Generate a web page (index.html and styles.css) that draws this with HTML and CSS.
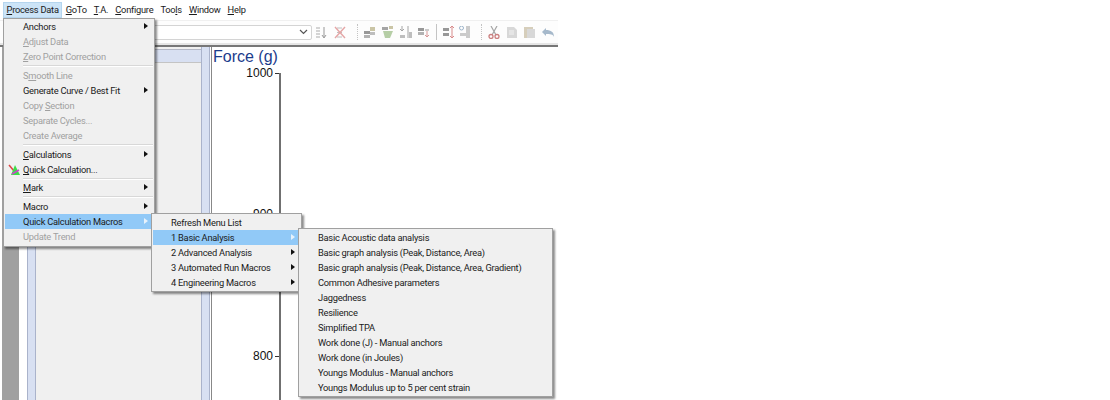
FILE: index.html
```html
<!DOCTYPE html>
<html lang="en">
<head>
  <meta charset="UTF-8" />
  <title>Process Data</title>
  <link rel="stylesheet" href="styles.css">
</head>
<body>
  <div class="app">
    <div class="menubar">
      <span class="top open"><u>P</u>rocess Data</span>
      <span class="top"><u>G</u>oTo</span>
      <span class="top"><u>T</u>.A.</span>
      <span class="top"><u>C</u>onfigure</span>
      <span class="top">Too<u>l</u>s</span>
      <span class="top"><u>W</u>indow</span>
      <span class="top"><u>H</u>elp</span>
    </div>
    <div class="toolbar">
      <div class="combo">
        <svg width="9" height="6" viewBox="0 0 9 6"><path d="M1 1l3.500 3.500L8 1" fill="none" stroke="#555" stroke-width="1.200"/></svg>
      </div>
      <div class="tools">
        <svg width="12" height="13" viewBox="0 0 12 13"><path d="M1 2h4M1 5h4M1 8h4M1 11h4" stroke="#b5b5b5" stroke-width="1.500"/><path d="M9 1v10M7 9l2 3 2-3" fill="none" stroke="#777"/></svg>
        <svg class="nudge" width="12" height="13" viewBox="0 0 12 13"><path d="M3 2h5M3 6.500h5M3 11h5" stroke="#aaa"/><path d="M1 1l10 11M11 1L1 12" stroke="#d88" stroke-width="1.400"/></svg>
        <i class="sep dots first"></i>
        <svg width="12" height="12" viewBox="0 0 12 12"><rect x="0" y="5" width="6" height="3" fill="#777"/><rect x="0" y="9" width="6" height="3" fill="#999"/><rect x="6" y="1" width="5" height="4" fill="#b9b38a"/><rect x="6" y="6" width="5" height="3" fill="#aaa"/></svg>
        <svg width="12" height="12" viewBox="0 0 12 12"><rect x="0" y="1" width="6" height="3" fill="#888"/><path d="M1 5h10l-3 7H3z" fill="#9fbf8a"/><rect x="7" y="0" width="4" height="3" fill="#b9b38a"/></svg>
        <svg width="12" height="12" viewBox="0 0 12 12"><path d="M2 0v5M0 3l2 2 2-2M8 0v12" fill="none" stroke="#888"/><path d="M0 9h5v3H0zM9 6h3v6H9z" fill="#aaa"/></svg>
        <svg width="12" height="12" viewBox="0 0 12 12"><rect x="0" y="2" width="6" height="3" fill="#777"/><rect x="0" y="6" width="6" height="3" fill="#999"/><path d="M9 5v6M7 9l2 2 2-2" fill="none" stroke="#c77"/><rect x="7" y="3" width="4" height="2" fill="#bbb"/></svg>
        <i class="sep"></i>
        <svg width="12" height="12" viewBox="0 0 12 12"><rect x="0" y="2" width="6" height="3" fill="#777"/><rect x="0" y="7" width="6" height="3" fill="#777"/><path d="M9 0v12M7 2l2-2 2 2M7 10l2 2 2-2" fill="none" stroke="#c66"/></svg>
        <svg class="pull" width="12" height="12" viewBox="0 0 12 12"><circle cx="2.500" cy="2" r="2" fill="none" stroke="#7a9ab8"/><path d="M7 0h4v12H7zM1 7h6v3H1z" fill="#bbb"/></svg>
        <i class="sep dots last"></i>
        <svg width="12" height="13" viewBox="0 0 12 13"><path d="M3 0l5 9M9 0L4 9" stroke="#888" stroke-width="1.200"/><circle cx="3" cy="10.500" r="2" fill="none" stroke="#b55" stroke-width="1.300"/><circle cx="9" cy="10.500" r="2" fill="none" stroke="#b55" stroke-width="1.300"/></svg>
        <svg width="12" height="11" viewBox="0 0 12 11"><path d="M1 0h7l3 3v8H1z" fill="#ccc"/><path d="M3 3h5v5H3z" fill="#ddd"/></svg>
        <svg width="12" height="12" viewBox="0 0 12 12"><rect x="0" y="1" width="9" height="11" fill="#c9bfa6"/><rect x="3" y="3" width="8" height="9" fill="#ccc"/></svg>
        <svg width="12" height="9" viewBox="0 0 12 9"><path d="M0 4l4-4v2c5 0 8 2 8 7-1-3-4-3-8-3v2z" fill="#8aa3bb"/></svg>
      </div>
    </div>
    <div class="workspace">
      <div class="strip"></div>
      <div class="margin"></div>
      <div class="divider"></div>
      <div class="panel"><div class="panel-head"></div></div>
      <div class="divider"></div>
      <div class="plot">
        <div class="plot-title">Force (g)</div>
        <div class="axis">
          <span class="tick t1000">1000</span>
          <span class="tick t900">900</span>
          <span class="tick t800">800</span>
        </div>
      </div>
    </div>
  </div>

  <ul class="menu menu-main">
    <li class="item sub">Anchors</li>
    <li class="item off"><u>A</u>djust Data</li>
    <li class="item off"><u>Z</u>ero Point Correction</li>
    <li class="rule"></li>
    <li class="item off">S<u>m</u>ooth Line</li>
    <li class="item sub">Generate Curve / Best Fit</li>
    <li class="item off">Copy <u>S</u>ection</li>
    <li class="item off">Separate Cycles...</li>
    <li class="item off">Create Average</li>
    <li class="rule"></li>
    <li class="item sub"><u>C</u>alculations</li>
    <li class="item">
      <svg class="calc-icon" width="14" height="12" viewBox="0 0 14 12"><path d="M1 1l5 6" stroke="#d44" stroke-width="1.500"/><path d="M7 1L3 11h9z" fill="#3ddc4a"/><path d="M4 10l7-4" stroke="#c4c" stroke-width="1.500"/></svg>
      <u>Q</u>uick Calculation...
    </li>
    <li class="rule tight"></li>
    <li class="item sub"><u>M</u>ark</li>
    <li class="rule"></li>
    <li class="item sub">Macro</li>
    <li class="item sub active">Quick Calculation Macros</li>
    <li class="item off">Update Trend</li>
  </ul>

  <ul class="menu menu-macros">
    <li class="item">Refresh Menu List</li>
    <li class="item sub active">1 Basic Analysis</li>
    <li class="item sub">2 Advanced Analysis</li>
    <li class="item sub">3 Automated Run Macros</li>
    <li class="item sub">4 Engineering Macros</li>
  </ul>

  <ul class="menu menu-basic">
    <li class="item">Basic Acoustic data analysis</li>
    <li class="item">Basic graph analysis (Peak, Distance, Area)</li>
    <li class="item">Basic graph analysis (Peak, Distance, Area, Gradient)</li>
    <li class="item">Common Adhesive parameters</li>
    <li class="item">Jaggedness</li>
    <li class="item">Resilience</li>
    <li class="item">Simplified TPA</li>
    <li class="item">Work done (J) - Manual anchors</li>
    <li class="item">Work done (in Joules)</li>
    <li class="item">Youngs Modulus - Manual anchors</li>
    <li class="item">Youngs Modulus up to 5 per cent strain</li>
  </ul>
</body>
</html>
```

FILE: styles.css
```css
html, body {
  margin: 0;
  padding: 0;
  height: 400px;
  overflow: hidden;
  background-color: #fff;
}

body {
  font-family: Roboto, "Noto Sans", sans-serif;
  font-size: 9.3px;
  letter-spacing: -0.25px;
  color: #1a1a1a;
  position: relative;
}

u {
  text-underline-offset: 1px;
}

.app {
  width: 558px;
  height: 400px;
  display: flex;
  flex-direction: column;
}

.menubar {
  height: 20px;
  padding-left: 3px;
  box-sizing: border-box;
  display: flex;
  align-items: center;
  background-color: #fff;
}

.top {
  height: 16px;
  line-height: 16px;
  padding: 0 3.500px;
}

.top.open {
  background-color: #cce4f7;
  box-shadow: inset 0 0 0 1px #b5d5ee;
}

.toolbar {
  height: 25px;
  box-sizing: border-box;
  display: flex;
  align-items: center;
  background-color: #fdfdfd;
  border-top: 1px solid #f0f0f0;
  border-bottom: 2px solid #e6e6e6;
}

.combo {
  width: 160px;
  height: 15px;
  margin-left: 152px;
  padding-right: 3px;
  box-sizing: border-box;
  display: flex;
  align-items: center;
  justify-content: flex-end;
  background-color: #fff;
  border: 1px solid #d4d4d4;
  border-radius: 2px;
}

.tools {
  display: flex;
  align-items: center;
  gap: 6px;
  margin-left: 3px;
}

.tools svg {
  opacity: 0.75;
}

.nudge {
  margin-left: 1px;
}

.pull {
  margin-left: -2px;
}

.sep {
  width: 1px;
  height: 16px;
  background-color: #c4c4c4;
}

.sep.dots {
  width: 0;
  background-color: transparent;
  border-left: 1px dotted #c4c4c4;
}

.sep.first {
  margin-left: 5px;
}

.sep.last {
  margin-left: 4px;
}

.workspace {
  flex: 1;
  min-height: 0;
  display: flex;
  border-top: 2px solid #777;
}

.strip {
  width: 17px;
  margin-left: 2px;
  background-color: #a0a0a0;
}

.margin {
  width: 8px;
  background-color: #fff;
}

.divider {
  width: 9px;
  box-sizing: border-box;
  background-color: #d8e0f2;
  border-left: 1px solid #aab3cb;
  border-right: 1px solid #aab3cb;
}

.panel {
  width: 165px;
  background-color: #f0f0f0;
}

.panel-head {
  height: 12px;
  margin-top: 2px;
  background-color: #d8e0f2;
  border-top: 1px solid #b4b8c6;
  border-bottom: 1px solid #c4c4c4;
}

.plot {
  flex: 1;
  display: flex;
  flex-direction: column;
  margin-left: 1px;
  padding-left: 1px;
  background-color: #fff;
  border-left: 1px solid #888;
}

.plot-title {
  height: 19px;
  font-family: "Liberation Sans", sans-serif;
  font-size: 16px;
  line-height: 19px;
  letter-spacing: 0;
  color: #1c3c8c;
}

.axis {
  position: relative;
  flex: 1;
  width: 68px;
  margin-top: 7px;
  box-sizing: border-box;
  border-right: 2px solid #707070;
}

.tick {
  position: absolute;
  right: 0;
  padding-right: 6px;
  font-family: "Liberation Sans", sans-serif;
  font-size: 12px;
  line-height: 15px;
  letter-spacing: 0;
  color: #111;
}

.tick::after {
  content: "";
  position: absolute;
  right: 0;
  top: 7px;
  width: 4px;
  height: 1px;
  background-color: #333;
}

.t1000 { top: -7px; }
.t900 { top: 134px; }
.t800 { top: 276px; }

/* menus sit over the window */
.menu {
  position: absolute;
  margin: 0;
  padding: 1px;
  list-style: none;
  background-color: #f0f0f0;
  border: 1px solid #a0a0a0;
  box-shadow: 2px 2px 2px rgba(0, 0, 0, 0.45);
}

.menu-main {
  left: 3px;
  top: 18px;
  width: 148px;
  padding-top: 0;
  padding-bottom: 2px;
}

.menu-macros {
  left: 151px;
  top: 213px;
  width: 147px;
}

.menu-basic {
  left: 298px;
  top: 228px;
  width: 251px;
}

.item {
  position: relative;
  height: 15px;
  line-height: 15px;
  padding-left: 18px;
  white-space: nowrap;
}

.off {
  color: #a0a0a0;
}

.active {
  background-color: #91c9f7;
}

.sub::after {
  content: "";
  position: absolute;
  right: 5px;
  top: 4px;
  border-left: 4px solid #111;
  border-top: 3px solid transparent;
  border-bottom: 3px solid transparent;
}

.sub.active::after {
  border-left-color: #e8f2fb;
}

.rule {
  height: 1px;
  margin: 1px 0 1px 18px;
  background-color: #d8d8d8;
  border-bottom: 1px solid #fff;
}

.rule.tight {
  margin-bottom: 0;
}

.calc-icon {
  position: absolute;
  left: 3px;
  top: 2px;
}
```
